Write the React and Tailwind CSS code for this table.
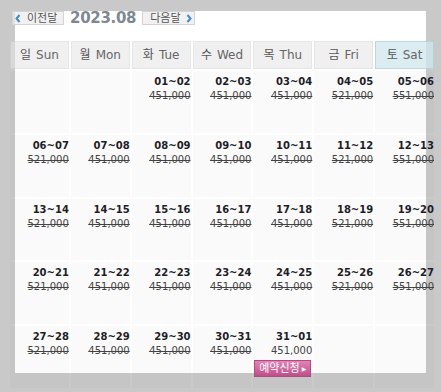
import React from "react";

const F = "font-['DejaVu_Sans','Noto_Sans_CJK_KR',sans-serif]";

const heads = [
  ["일", "Sun"],
  ["월", "Mon"],
  ["화", "Tue"],
  ["수", "Wed"],
  ["목", "Thu"],
  ["금", "Fri"],
  ["토", "Sat"],
];

const rows = [
  [null, null, ["01~02", "451,000"], ["02~03", "451,000"], ["03~04", "451,000"], ["04~05", "521,000"], ["05~06", "551,000"]],
  [["06~07", "521,000"], ["07~08", "451,000"], ["08~09", "451,000"], ["09~10", "451,000"], ["10~11", "451,000"], ["11~12", "521,000"], ["12~13", "551,000"]],
  [["13~14", "521,000"], ["14~15", "451,000"], ["15~16", "451,000"], ["16~17", "451,000"], ["17~18", "451,000"], ["18~19", "521,000"], ["19~20", "551,000"]],
  [["20~21", "521,000"], ["21~22", "451,000"], ["22~23", "451,000"], ["23~24", "451,000"], ["24~25", "451,000"], ["25~26", "521,000"], ["26~27", "551,000"]],
  [["27~28", "521,000"], ["28~29", "451,000"], ["29~30", "451,000"], ["30~31", "451,000"], ["31~01", "451,000", true], null, null],
];

function Chevron({ dir }) {
  return (
    <svg width="6" height="9" viewBox="0 0 6 9" className="shrink-0">
      <path
        d={dir === "left" ? "M4.5 1 L1.5 4.5 L4.5 8" : "M1.5 1 L4.5 4.5 L1.5 8"}
        fill="none"
        stroke="#3d8bd4"
        strokeWidth="2"
      />
    </svg>
  );
}

export default function App() {
  return (
    <div className={`w-[441px] h-[392px] overflow-hidden bg-[#c9c9c9] p-[15px] ${F}`}>
      <div className="w-[411px] h-[362px] bg-white">
        <div className="flex items-center ml-[-3px] mt-[-4px] h-[14px]">
          <div className="flex items-center gap-[6px] h-[14px] w-[52px] pl-[2px] border border-[#d4d4d4] bg-[rgba(235,235,235,0.7)] text-[11px] leading-none text-[#555]">
            <Chevron dir="left" />
            <span>이전달</span>
          </div>
          <div className="ml-[6px] text-[15px] leading-none font-bold text-[#7e8893] tracking-[-0.3px]">2023.08</div>
          <div className="ml-[6px] flex items-center gap-[5px] h-[14px] w-[53px] pl-[7px] border border-[#d4d4d4] bg-[rgba(235,235,235,0.7)] text-[11px] leading-none text-[#555]">
            <span>다음달</span>
            <Chevron dir="right" />
          </div>
        </div>

        <div className="ml-[-5px] mt-[16px] w-[424px] grid grid-cols-7 gap-[2px]">
          {heads.map(([k, e], i) => (
            <div
              key={e}
              className={`h-[28px] flex items-center justify-center gap-[5px] text-[12px] text-[#666] border ${
                i === 6
                  ? "bg-[rgba(208,231,238,0.75)] border-[rgba(150,195,210,0.5)]"
                  : "bg-[rgba(228,228,228,0.56)] border-[rgba(0,0,0,0.04)]"
              }`}
            >
              <span className="text-[#555]">{k}</span>
              <span>{e}</span>
            </div>
          ))}
          {rows.map((r, ri) =>
            r.map((c, ci) => (
              <div
                key={ri + "-" + ci}
                className="h-[61.75px] bg-[rgba(0,0,0,0.02)] flex flex-col items-end pt-[4px] text-[10px] leading-[14px]"
              >
                {c && (
                  <>
                    <span className="font-bold text-[#1e1e28]">{c[0]}</span>
                    <span className={c[2] ? "text-[#444]" : "text-[#444] line-through"}>{c[1]}</span>
                    {c[2] && (
                      <div className="mt-[2px] mr-[1px] w-[57px] h-[17px] flex items-center justify-center gap-[2px] bg-gradient-to-b from-[#e283b6] to-[#bf4e8a] border border-[#b04a80] text-white text-[11px] leading-none">
                        <span>예약신청</span>
                        <span className="text-[6px]">▶</span>
                      </div>
                    )}
                  </>
                )}
              </div>
            ))
          )}
        </div>
      </div>
    </div>
  );
}
